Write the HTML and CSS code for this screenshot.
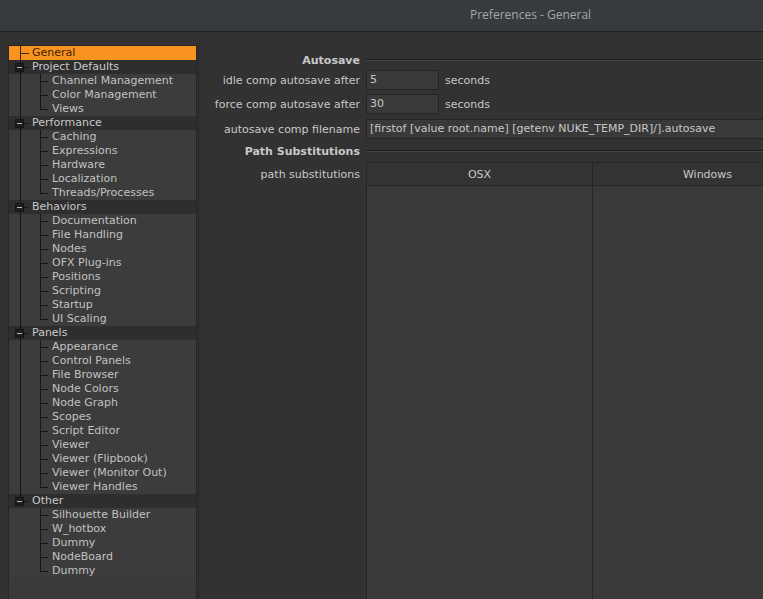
FILE: index.html
```html
<!DOCTYPE html>
<html lang="en">
<head>
    <meta charset="UTF-8">
    <title>Preferences - General</title>
    <link rel="stylesheet" href="styles.css">
</head>
<body>
    <div class="titlebar">Preferences - General</div>
    <div class="main">
        <div class="tree">
            <div class="row general">General</div>

            <div class="row head"><span class="box"></span>Project Defaults</div>
            <div class="row sub">Channel Management</div>
            <div class="row sub">Color Management</div>
            <div class="row sub last">Views</div>

            <div class="row head"><span class="box"></span>Performance</div>
            <div class="row sub">Caching</div>
            <div class="row sub">Expressions</div>
            <div class="row sub">Hardware</div>
            <div class="row sub">Localization</div>
            <div class="row sub last">Threads/Processes</div>

            <div class="row head"><span class="box"></span>Behaviors</div>
            <div class="row sub">Documentation</div>
            <div class="row sub">File Handling</div>
            <div class="row sub">Nodes</div>
            <div class="row sub">OFX Plug-ins</div>
            <div class="row sub">Positions</div>
            <div class="row sub">Scripting</div>
            <div class="row sub">Startup</div>
            <div class="row sub last">UI Scaling</div>

            <div class="row head"><span class="box"></span>Panels</div>
            <div class="row sub">Appearance</div>
            <div class="row sub">Control Panels</div>
            <div class="row sub">File Browser</div>
            <div class="row sub">Node Colors</div>
            <div class="row sub">Node Graph</div>
            <div class="row sub">Scopes</div>
            <div class="row sub">Script Editor</div>
            <div class="row sub">Viewer</div>
            <div class="row sub">Viewer (Flipbook)</div>
            <div class="row sub">Viewer (Monitor Out)</div>
            <div class="row sub last">Viewer Handles</div>

            <div class="row head end"><span class="box"></span>Other</div>
            <div class="row sub end">Silhouette Builder</div>
            <div class="row sub end">W_hotbox</div>
            <div class="row sub end">Dummy</div>
            <div class="row sub end">NodeBoard</div>
            <div class="row sub end last">Dummy</div>
        </div>

        <div class="panel">
            <div class="line section first">
                <div class="label">Autosave</div>
                <div class="rule"></div>
            </div>
            <div class="line idle">
                <div class="label">idle comp autosave after</div>
                <div class="input">5</div>
                <div class="unit">seconds</div>
            </div>
            <div class="line force">
                <div class="label">force comp autosave after</div>
                <div class="input">30</div>
                <div class="unit">seconds</div>
            </div>
            <div class="line filename">
                <div class="label">autosave comp filename</div>
                <div class="input wide">[firstof [value root.name] [getenv NUKE_TEMP_DIR]/].autosave</div>
            </div>
            <div class="line section second">
                <div class="label">Path Substitutions</div>
                <div class="rule"></div>
            </div>
            <div class="line table-row">
                <div class="label">path substitutions</div>
                <div class="table">
                    <div class="th">OSX</div>
                    <div class="th col2">Windows</div>
                    <div class="td"></div>
                    <div class="td col2"></div>
                </div>
            </div>
        </div>
    </div>
</body>
</html>
```

FILE: styles.css
```css
body {
    margin: 0;
    height: 599px;
    overflow: hidden;
    background-color: #323232;
    font-family: "DejaVu Sans", sans-serif;
    font-size: 11px;
    color: #c8c8c8;
    display: flex;
    flex-direction: column;
}

.titlebar {
    height: 32px;
    flex-shrink: 0;
    display: flex;
    align-items: center;
    padding-left: 470px;
    padding-bottom: 2px;
    box-sizing: border-box;
    background-color: #373b3d;
    border-bottom: 1px solid #1f1f1f;
    font-family: "Open Sans", sans-serif;
    font-size: 12px;
    color: #a3a7a9;
}

.main {
    flex: 1;
    display: flex;
    padding: 13px 0 0 8px;
    min-height: 0;
}

/* tree on the left */
.tree {
    width: 187px;
    flex-shrink: 0;
    background-color: #3a3a3a;
    border: 1px solid #272727;
    border-bottom: none;
    --ln: #161616;
}

.row {
    height: 14px;
    line-height: 14px;
    display: flex;
    align-items: center;
    white-space: nowrap;
}

.general {
    padding-left: 23px;
    color: #3d2406;
    background:
        linear-gradient(#3a2208, #3a2208) 11px 7px / 9px 1px no-repeat,
        linear-gradient(#3a2208, #3a2208) 11px 0 / 1px 100% no-repeat,
        #f7931e;
}

.head {
    padding-left: 6px;
    background:
        linear-gradient(var(--ln), var(--ln)) 11px 0 / 1px var(--rh, 100%) no-repeat,
        linear-gradient(var(--ln), var(--ln)) 14px 7px / 6px 1px no-repeat,
        #2e2e2e;
}

.head.end {
    --rh: 7px;
}

.box {
    width: 9px;
    height: 9px;
    box-sizing: border-box;
    margin-right: 8px;
    background-color: #1e1e1e;
    border: 1px solid #141414;
    display: flex;
    align-items: center;
    justify-content: center;
}

.box::before {
    content: "";
    width: 5px;
    height: 1px;
    background-color: #b8b8b8;
}

.sub {
    padding-left: 43px;
    color: #c2c2c2;
    background:
        linear-gradient(var(--ln), var(--ln)) 31px 7px / 8px 1px no-repeat,
        linear-gradient(var(--ln), var(--ln)) 31px 0 / 1px var(--vh, 100%) no-repeat,
        linear-gradient(var(--ln), var(--ln)) 11px 0 / 1px var(--rh, 100%) no-repeat,
        #3c3c3c;
}

.sub.last {
    --vh: 8px;
}

.sub.end {
    --rh: 0px;
}

/* settings on the right */
.panel {
    flex: 1;
    min-width: 0;
    display: flex;
    flex-direction: column;
    border-left: 1px solid #252525;
    margin-left: 1px;
    overflow: hidden;
}

.line {
    display: flex;
    align-items: center;
    gap: 6px;
    height: 20px;
    flex-shrink: 0;
}

.label {
    width: 161px;
    flex-shrink: 0;
    text-align: right;
    white-space: nowrap;
}

.section .label {
    font-weight: bold;
}

.rule {
    flex: 1;
    height: 0;
    border-top: 1px solid #1f1f1f;
    border-bottom: 1px solid #454545;
}

.first { margin-top: 5px; }
.idle { margin-top: 0; }
.force { margin-top: 4px; }
.filename { margin-top: 5px; }
.second { margin-top: 2px; }

.input {
    width: 73px;
    height: 20px;
    box-sizing: border-box;
    padding-left: 3px;
    line-height: 18px;
    background-color: #393939;
    border: 1px solid #252525;
    white-space: nowrap;
}

.input.wide {
    flex: 1;
    margin-right: -4px;
}

.table-row {
    margin-top: 1px;
    flex: 1;
    height: auto;
    align-items: flex-start;
}

.table-row .label {
    line-height: 24px;
    padding-top: 1px;
}

.table {
    flex: 1;
    align-self: stretch;
    display: grid;
    grid-template-columns: 225px 230px;
    grid-template-rows: 23px 1fr;
    border-top: 1px solid #252525;
    border-left: 1px solid #252525;
    background-color: #3a3a3a;
}

.th {
    background-color: #333333;
    border-bottom: 1px solid #262626;
    text-align: center;
    line-height: 22px;
    padding-top: 1px;
}

.col2 {
    border-left: 1px solid #262626;
}
```
